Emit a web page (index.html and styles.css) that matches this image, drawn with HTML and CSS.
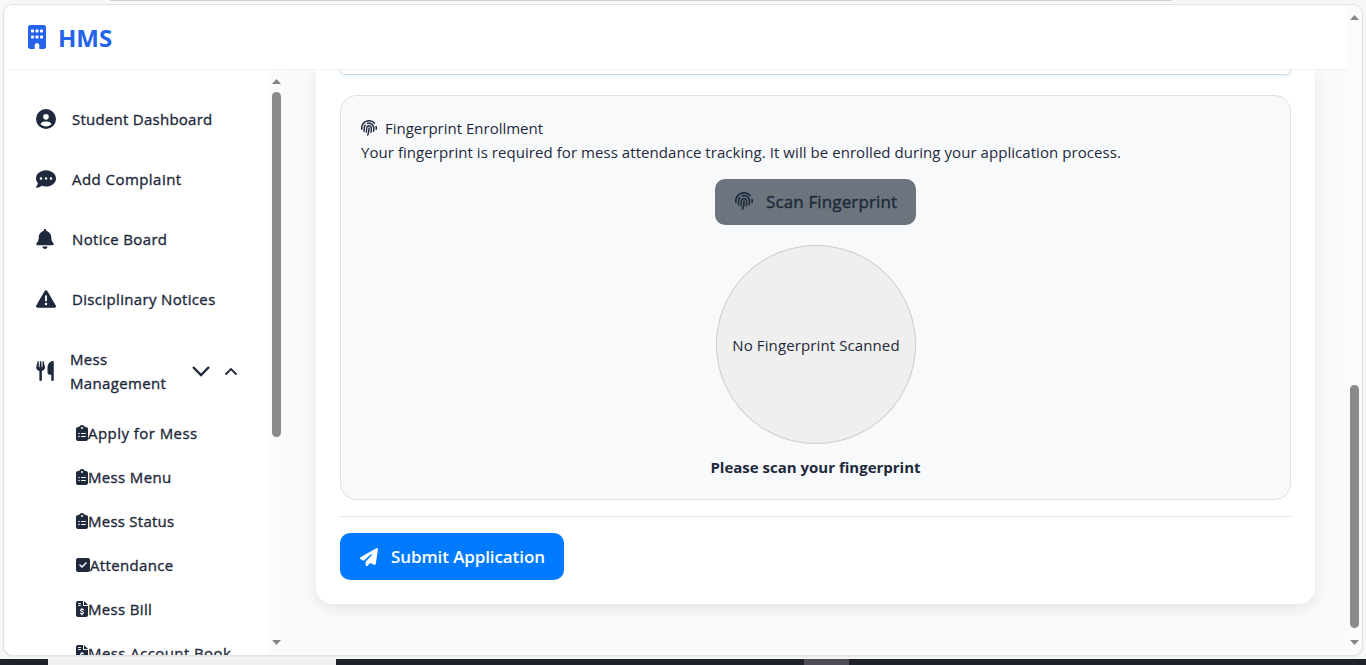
FILE: index.html
```
<!DOCTYPE html>
<html lang="en">
<head>
<meta charset="utf-8">
<title>HMS</title>
<link rel="stylesheet" href="styles.css">
</head>
<body>
<svg class="defs" aria-hidden="true">
<symbol id="building" viewBox="0 0 384 512"><path d="M48 0C21.500 0 0 21.500 0 48V464c0 26.500 21.500 48 48 48h96V432c0-26.500 21.500-48 48-48s48 21.500 48 48v80h96c26.500 0 48-21.500 48-48V48c0-26.500-21.500-48-48-48H48zM64 240c0-8.800 7.200-16 16-16h32c8.800 0 16 7.200 16 16v32c0 8.800-7.200 16-16 16H80c-8.800 0-16-7.200-16-16V240zm112-16h32c8.800 0 16 7.200 16 16v32c0 8.800-7.200 16-16 16H176c-8.800 0-16-7.200-16-16V240c0-8.800 7.200-16 16-16zm80 16c0-8.800 7.200-16 16-16h32c8.800 0 16 7.200 16 16v32c0 8.800-7.200 16-16 16H272c-8.800 0-16-7.200-16-16V240zM80 96h32c8.800 0 16 7.200 16 16v32c0 8.800-7.200 16-16 16H80c-8.800 0-16-7.200-16-16V112c0-8.800 7.200-16 16-16zm80 16c0-8.800 7.200-16 16-16h32c8.800 0 16 7.200 16 16v32c0 8.800-7.200 16-16 16H176c-8.800 0-16-7.200-16-16V112zM272 96h32c8.800 0 16 7.200 16 16v32c0 8.800-7.200 16-16 16H272c-8.800 0-16-7.200-16-16V112c0-8.800 7.200-16 16-16z"/></symbol>
<symbol id="user" viewBox="0 0 512 512"><path d="M399 384.200C376.900 345.800 335.400 320 288 320H224c-47.400 0-88.900 25.800-111 64.200c35.200 39.200 86.200 63.800 143 63.800s107.800-24.700 143-63.800zM0 256a256 256 0 1 1 512 0A256 256 0 1 1 0 256zm256 16a72 72 0 1 0 0-144 72 72 0 1 0 0 144z"/></symbol>
<symbol id="comment" viewBox="0 0 512 512"><path d="M256 448c141.400 0 256-93.100 256-208S397.400 32 256 32S0 125.100 0 240c0 45.100 17.700 86.800 47.700 120.900c-1.900 24.500-11.400 46.300-21.400 62.900c-5.500 9.200-11.100 16.600-15.200 21.600c-2.100 2.500-3.700 4.400-4.900 5.700c-.6 .6-1 1.100-1.300 1.400l-.3 .3c-4.600 4.600-5.900 11.400-3.400 17.400c2.500 6 8.300 9.900 14.800 9.900c28.700 0 57.600-8.900 81.600-19.300c22.900-10 42.400-21.900 54.300-30.600c31.800 11.500 67 17.900 104.100 17.900zM128 208a32 32 0 1 1 0 64 32 32 0 1 1 0-64zm128 0a32 32 0 1 1 0 64 32 32 0 1 1 0-64zm96 32a32 32 0 1 1 64 0 32 32 0 1 1 -64 0z"/></symbol>
<symbol id="bell" viewBox="0 0 448 512"><path d="M224 0c-17.700 0-32 14.300-32 32V51.200C119 66 64 130.600 64 208v18.800c0 47-17.300 92.400-48.500 127.600l-7.400 8.300c-8.400 9.400-10.400 22.900-5.300 34.400S19.400 416 32 416H416c12.600 0 24-7.400 29.200-18.900s3.100-25-5.300-34.400l-7.400-8.300C401.300 319.200 384 273.900 384 226.800V208c0-77.400-55-142-128-156.800V32c0-17.700-14.300-32-32-32zm45.300 493.300c12-12 18.700-28.300 18.700-45.300H224 160c0 17 6.700 33.300 18.700 45.300s28.300 18.700 45.300 18.700s33.300-6.700 45.300-18.700z"/></symbol>
<symbol id="warning" viewBox="0 0 512 512"><path d="M256 32c14.200 0 27.300 7.500 34.500 19.800l216 368c7.300 12.400 7.300 27.700 .2 40.100S486.300 480 472 480H40c-14.300 0-27.600-7.700-34.700-20.100s-7-27.800 .2-40.100l216-368C228.700 39.500 241.800 32 256 32zm0 128c-13.300 0-24 10.700-24 24V296c0 13.300 10.700 24 24 24s24-10.700 24-24V184c0-13.300-10.700-24-24-24zm32 224a32 32 0 1 0 -64 0 32 32 0 1 0 64 0z"/></symbol>
<symbol id="utensils" viewBox="0 0 448 512"><path d="M416 0C400 0 288 32 288 176V288c0 35.300 28.700 64 64 64h32V480c0 17.700 14.300 32 32 32s32-14.300 32-32V32c0-17.700-14.300-32-32-32zM64 16C64 7.800 57.900 1 49.700 .1S34.200 4.600 32.400 12.500L2.100 148.800C.7 155.100 0 161.500 0 167.900c0 45.900 35.100 83.600 80 87.700V480c0 17.700 14.300 32 32 32s32-14.300 32-32V255.600c44.900-4.100 80-41.800 80-87.700c0-6.400-.7-12.800-2.100-19.100L191.600 12.500c-1.800-8-9.300-13.300-17.400-12.400S160 7.800 160 16V150.200c0 5.400-4.400 9.800-9.800 9.800c-5.100 0-9.300-3.900-9.800-9L127.900 14.600C127.200 6.300 120.300 0 112 0s-15.200 6.300-15.900 14.600L83.700 151c-.5 5.100-4.700 9-9.800 9c-5.400 0-9.800-4.400-9.800-9.800V16z"/></symbol>
<symbol id="clipboard" viewBox="0 0 384 512"><path d="M192 0c-41.800 0-77.400 26.700-90.500 64H64C28.700 64 0 92.700 0 128V448c0 35.300 28.700 64 64 64H320c35.300 0 64-28.700 64-64V128c0-35.300-28.700-64-64-64H282.500C269.400 26.700 233.800 0 192 0zm0 64a32 32 0 1 1 0 64 32 32 0 1 1 0-64zM72 272a24 24 0 1 1 48 0 24 24 0 1 1 -48 0zm104-16H304c8.800 0 16 7.200 16 16s-7.200 16-16 16H176c-8.800 0-16-7.200-16-16s7.200-16 16-16zM72 368a24 24 0 1 1 48 0 24 24 0 1 1 -48 0zm88 0c0-8.800 7.200-16 16-16H304c8.800 0 16 7.200 16 16s-7.200 16-16 16H176c-8.800 0-16-7.200-16-16z"/></symbol>
<symbol id="check" viewBox="0 0 448 512"><path d="M64 32C28.700 32 0 60.700 0 96V416c0 35.300 28.700 64 64 64H384c35.300 0 64-28.700 64-64V96c0-35.300-28.700-64-64-64H64zM337 209L209 337c-9.400 9.400-24.600 9.400-33.900 0l-64-64c-9.400-9.400-9.400-24.600 0-33.900s24.600-9.400 33.900 0l47 47L303 175c9.400-9.400 24.600-9.400 33.900 0s9.400 24.600 0 33.900z"/></symbol>
<symbol id="invoice" viewBox="0 0 384 512"><path d="M64 0C28.700 0 0 28.700 0 64V448c0 35.300 28.700 64 64 64H320c35.300 0 64-28.700 64-64V160H256c-17.700 0-32-14.300-32-32V0H64zM256 0V128H384L256 0zM64 80c0-8.800 7.200-16 16-16h64c8.800 0 16 7.200 16 16s-7.200 16-16 16H80c-8.800 0-16-7.200-16-16zm0 64c0-8.800 7.200-16 16-16h64c8.800 0 16 7.200 16 16s-7.200 16-16 16H80c-8.800 0-16-7.200-16-16z"/><path class="cut" d="M192 235v30M192 415v30M240 282c-20-15-48-18-66-13c-29 9-35 45-3 60l42 15c35 14 27 55-4 63c-22 6-50-1-70-14"/></symbol>
<symbol id="fingerprint" viewBox="0 0 512 512"><path d="M48 256C48 141.100 141.100 48 256 48c63.100 0 119.600 28.100 157.800 72.500c8.600 10.100 23.800 11.200 33.800 2.600s11.200-23.800 2.600-33.800C403.300 34.600 333.700 0 256 0C114.600 0 0 114.600 0 256v40c0 13.300 10.700 24 24 24s24-10.700 24-24V256zm458.500-52.900c-2.700-13-15.500-21.300-28.400-18.500s-21.300 15.500-18.500 28.400c2.900 13.900 4.500 28.300 4.500 43.100v40c0 13.300 10.700 24 24 24s24-10.700 24-24V256c0-18.100-1.900-35.800-5.500-52.900zM256 80c-19 0-37.400 3-54.500 8.600c-15.200 5-18.700 23.700-8.300 35.900c7.100 8.300 18.800 10.800 29.400 7.900c10.600-2.900 21.800-4.400 33.400-4.400c70.700 0 128 57.300 128 128v24.900c0 25.200-1.500 50.300-4.400 75.300c-1.700 14.600 9.400 27.800 24.200 27.800c11.800 0 21.900-8.600 23.300-20.300c3.300-27.400 5-55 5-82.700V256c0-97.200-78.800-176-176-176zM150.700 148.700c-9.100-10.600-25.300-11.400-33.900-.4C93.700 178 80 215.400 80 256v24.900c0 24.200-2.600 48.400-7.800 71.900C68.800 368.400 80.100 384 96.100 384c10.500 0 19.900-7 22.200-17.300c6.400-28.100 9.700-56.800 9.700-85.800V256c0-27.200 8.500-52.400 22.900-73.100c7.200-10.400 8-24.600-.2-34.200zM256 160c-53 0-96 43-96 96v24.900c0 35.900-4.600 71.500-13.800 106.100c-3.800 14.300 6.700 29 21.500 29c9.500 0 17.900-6.200 20.400-15.400c10.500-39 15.900-79.200 15.900-119.700V256c0-28.700 23.300-52 52-52s52 23.300 52 52v24.900c0 36.300-3.500 72.400-10.400 107.900c-2.700 13.900 7.700 27.200 21.800 27.200c10.200 0 19-7 21-17c7.700-38.800 11.600-78.300 11.600-118.100V256c0-53-43-96-96-96zm24 96c0-13.300-10.700-24-24-24s-24 10.700-24 24v24.900c0 59.900-11 119.300-32.500 175.200l-5.900 15.300c-4.800 12.400 1.400 26.300 13.800 31s26.300-1.400 31-13.800l5.900-15.300C267.900 411.900 280 346.900 280 280.900V256z"/></symbol>
<symbol id="plane" viewBox="0 0 512 512"><path d="M498.100 5.600c10.100 7 15.400 19.100 13.500 31.200l-64 416c-1.500 9.700-7.400 18.200-16 23s-18.900 5.400-28 1.600L284 427.700l-68.500 74.100c-8.900 9.700-22.900 12.900-35.200 8.100S160 493.200 160 480V396.400c0-4 1.500-7.800 4.200-10.700L331.800 202.800c5.800-6.300 5.600-16-.4-22s-15.700-6.400-22-.7L106 360.800 17.700 316.600C7.100 311.300 .3 300.700 0 288.900s5.900-22.800 16.100-28.700l448-256c10.700-6.100 23.900-5.500 34 1.400z"/></symbol>
</svg>
<div class="topline"></div>
<div class="window">
  <div class="app">
    <header class="header"><svg class="logo"><use href="#building"/></svg><span class="brand">HMS</span></header>
    <div class="body">
      <nav class="sidebar">
        <a class="item"><svg class="ic"><use href="#user"/></svg><span class="t1">Student Dashboard</span></a>
        <a class="item"><svg class="ic"><use href="#comment"/></svg><span class="t2">Add Complaint</span></a>
        <a class="item"><svg class="ic bell"><use href="#bell"/></svg><span class="t3">Notice Board</span></a>
        <a class="item"><svg class="ic"><use href="#warning"/></svg><span class="t4">Disciplinary Notices</span></a>
        <a class="item group"><svg class="ic utensils"><use href="#utensils"/></svg><span class="t5">Mess<br>Management</span>
          <svg class="down" viewBox="0 0 18 11"><path d="M1 1l8 8 8-8"/></svg>
          <svg class="up" viewBox="0 0 14 9"><path d="M1.500 7.500L7 2l5.500 5.500"/></svg></a>
        <a class="sub"><svg><use href="#clipboard"/></svg><span class="s1">Apply for Mess</span></a>
        <a class="sub"><svg><use href="#clipboard"/></svg><span class="s2">Mess Menu</span></a>
        <a class="sub"><svg><use href="#clipboard"/></svg><span class="s3">Mess Status</span></a>
        <a class="sub"><svg class="wide"><use href="#check"/></svg><span class="s4">Attendance</span></a>
        <a class="sub"><svg><use href="#invoice"/></svg><span class="s5">Mess Bill</span></a>
        <a class="sub"><svg><use href="#invoice"/></svg><span class="s6">Mess Account Book</span></a>
      </nav>
      <div class="scroll side"><i class="arrow"></i><i class="thumb"></i><i class="arrow flip"></i></div>
      <main class="main">
        <section class="card">
          <div class="field"></div>
          <div class="panel">
            <div class="title"><svg><use href="#fingerprint"/></svg><span>Fingerprint Enrollment</span></div>
            <p class="desc"><span>Your fingerprint is required for mess attendance tracking. It will be enrolled during your application process.</span></p>
            <div class="scan"><svg><use href="#fingerprint"/></svg><span>Scan Fingerprint</span></div>
            <div class="circle"><span>No Fingerprint Scanned</span></div>
            <p class="hint"><span>Please scan your fingerprint</span></p>
          </div>
          <hr class="rule">
          <div class="submit"><svg><use href="#plane"/></svg><span>Submit Application</span></div>
        </section>
      </main>
    </div>
  </div>
  <div class="scroll page"><i class="arrow"></i><i class="thumb"></i><i class="arrow flip"></i></div>
</div>
<div class="taskbar"><i class="light"></i><i class="grey"></i></div>
</body>
</html>
```
FILE: styles.css
```
* { box-sizing: border-box; }
body { margin: 0; width: 1366px; height: 665px; overflow: hidden; background: #f7f7f7; font-family: "Open Sans", "Noto Sans", sans-serif; font-size: 15px; line-height: 24px; color: #1e293b; }
svg { display: block; fill: currentColor; flex: none; }
span { white-space: nowrap; }
p { margin: 0; }
.defs { position: absolute; width: 0; height: 0; }
.cut { fill: none; stroke: #fff; stroke-width: 36; stroke-linecap: round; }
.topline { height: 1px; width: 1062px; margin: 0 0 4px 110px; background: #d0d0d0; }
.window { display: flex; width: 1358px; height: 650px; margin-left: 4px; background: #fcfcfc; border-radius: 9px; overflow: hidden; box-shadow: 0 0 0 1px #e2e2e2, 0 1px 2px #c8c8c8; }
.app { width: 1343px; display: flex; flex-direction: column; }
.header { height: 65px; flex: none; display: flex; align-items: center; padding: 2px 24px 0; gap: 12px; background: #fff; border-bottom: 1px solid #f3f4f6; color: #2563eb; }
.logo { width: 18px; height: 24px; margin-top: -3px; }
.brand { font-size: 24px; font-weight: 700; line-height: 32px; }
.body { display: flex; height: 585px; overflow: hidden; }
.sidebar { width: 264px; flex: none; background: #fff; padding: 19px 0 0 32px; }
.sidebar span { -webkit-text-stroke: .35px currentColor; letter-spacing: .34px; }
.sidebar .t1, .sidebar .s3 { letter-spacing: .25px; }
.sidebar .t2, .sidebar .s1 { letter-spacing: .45px; }
.sidebar .s6 { letter-spacing: .41px; }
.item { display: flex; align-items: center; height: 60px; gap: 16px; }
.ic { width: 20px; height: 20px; margin-top: -1px; }
.bell { width: 18px; margin-right: 2px; }
.utensils { width: 18px; }
.group { height: 84px; margin-bottom: -2px; }
.group .t5 { width: 122px; }
.down { width: 18px; height: 11px; margin-left: -16px; fill: none; stroke: currentColor; stroke-width: 2.400; }
.up { width: 14px; height: 9px; margin-left: -2px; fill: none; stroke: currentColor; stroke-width: 1.800; }
.sub { display: flex; align-items: center; height: 44px; padding-left: 40px; }
.sub svg { width: 12px; height: 16px; }
.sub .wide { width: 14px; }
.scroll { width: 15px; flex: none; background: #fbfbfb; display: flex; flex-direction: column; align-items: center; }
.arrow { width: 9px; height: 5px; background: #858585; clip-path: polygon(50% 0, 100% 100%, 0 100%); }
.flip { transform: rotate(180deg); }
.thumb { width: 9px; border-radius: 5px; background: #8b8b8b; }
.side { padding-top: 9px; padding-left: 2px; }
.side .thumb { height: 345px; margin: 8px 0 203px; }
.page { padding-top: 10px; }
.page .thumb { height: 243px; margin: 365px 0 12px; }
.main { flex: 1; background: #f8fafc; padding: 0 32px 0 33px; }
.card { height: 534px; width: 999px; background: #fff; border-radius: 0 0 16px 16px; padding: 0 24px; box-shadow: 0 4px 15px rgba(0,0,0,.09); }
.field { height: 5px; border: 1px solid #cbd5e1; border-top: 0; border-radius: 0 0 8px 8px; box-shadow: 0 1px 4px #dceefa; }
.panel { height: 405px; margin-top: 20px; border: 1px solid #dee2e6; border-radius: 16px; background: #f8f9fb; padding: 20px; display: flex; flex-direction: column; }
.title { display: flex; gap: 8px; align-items: center; height: 24px; }
.title svg { width: 16px; height: 16px; margin-top: -1px; }
.desc { letter-spacing: .057px; }
.scan { align-self: center; width: 201px; height: 46px; margin-top: 15px; border-radius: 10px; background: #6c757d; display: flex; align-items: center; padding-left: 20px; gap: 13px; font-size: 17px; letter-spacing: .13px; }
.scan span { -webkit-text-stroke: .4px currentColor; padding-top: 1px; }
.scan svg { width: 18px; height: 18px; margin-top: -1px; }
.circle { align-self: center; width: 200px; height: 200px; margin-top: 20px; margin-left: 1px; border: 1px solid #ccc; border-radius: 50%; background: #efefef; display: flex; align-items: center; justify-content: center; letter-spacing: .11px; padding-top: 2px; }
.hint { text-align: center; margin-top: 11px; font-weight: 700; }
.rule { height: 1px; border: 0; margin: 16px 0; background: #e2e4e6; }
.submit { width: 224px; height: 47px; border-radius: 10px; background: #007bff; color: #fff; display: flex; align-items: center; padding-left: 20px; gap: 13px; font-size: 17px; font-weight: 600; letter-spacing: -.1px; }
.submit svg { width: 18px; height: 18px; }
.taskbar { display: flex; margin-top: 4px; height: 6px; background: #20222a; padding-left: 48px; gap: 468px; }
.light { width: 288px; background: #f1f1f1; }
.grey { width: 45px; background: #504d56; }
```
